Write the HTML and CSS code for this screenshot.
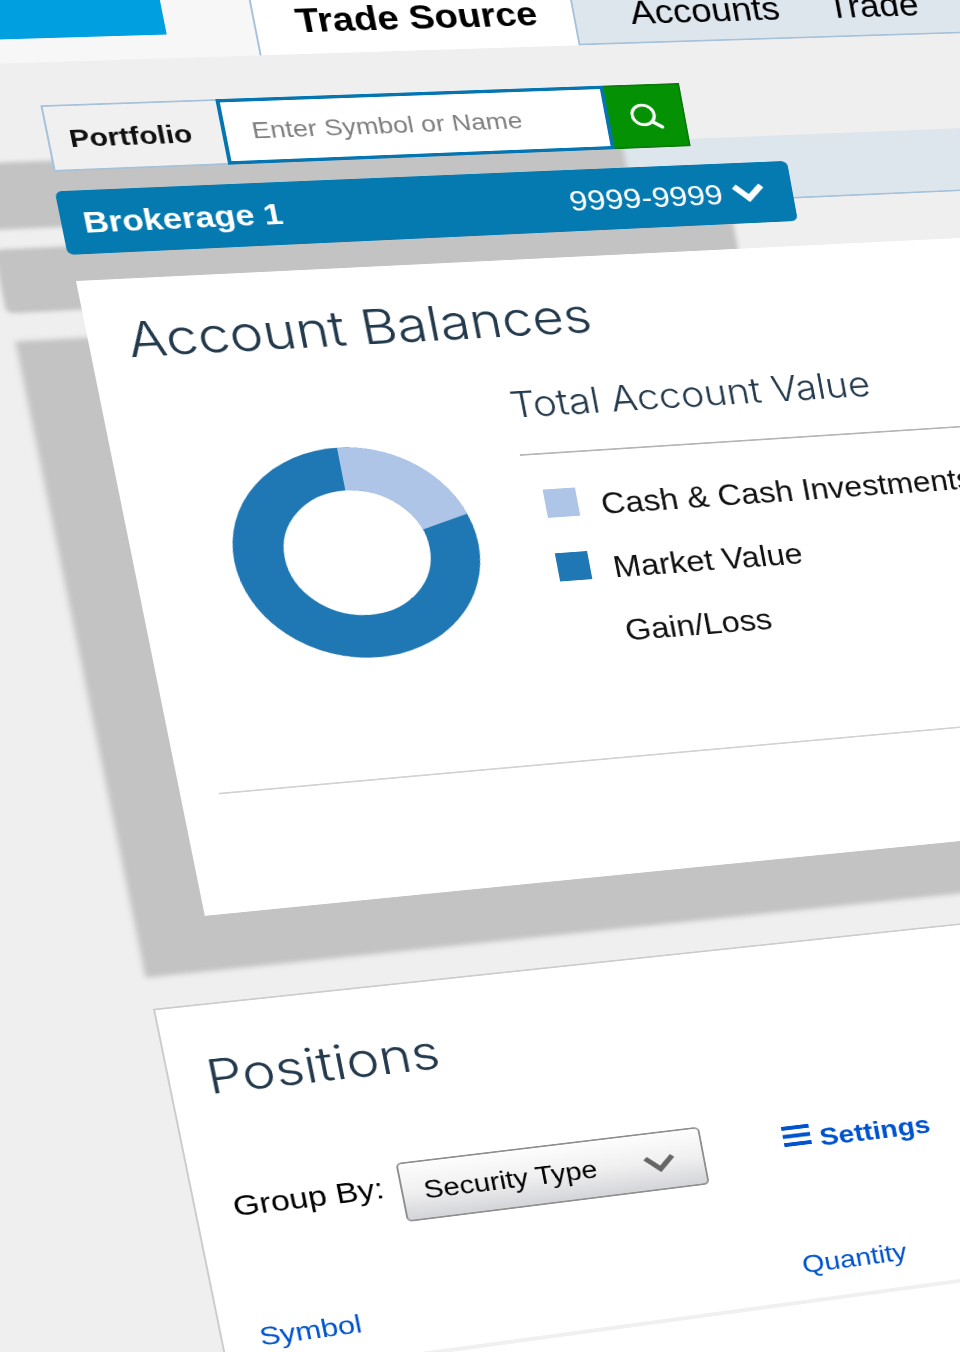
FILE: index.html
```html
<!DOCTYPE html>
<html lang="en">
<head>
<meta charset="utf-8">
<title>Trade Source</title>
<link rel="stylesheet" href="styles.css">
</head>
<body>
<div class="scene">
  <div class="plane">
    <header class="header">
      <div class="logo"></div>
      <a class="tab" href="#">Trade Source</a>
      <nav class="nav">
        <a href="#">Accounts</a>
        <a href="#">Trade</a>
      </nav>
    </header>
    <div class="subnav"></div>
    <main class="main">
      <form class="search">
        <label class="search-label" for="symbol">Portfolio</label>
        <input class="search-input" id="symbol" type="text" placeholder="Enter Symbol or Name">
        <button class="search-button" type="button" aria-label="Search">
          <svg width="34" height="32" viewBox="0 0 34 32" fill="none" stroke="#fff" stroke-width="3.500">
            <circle cx="13.500" cy="14.500" r="12"/>
            <path d="M22 23L32 30" stroke-width="4" stroke-linecap="round"/>
          </svg>
        </button>
      </form>
      <button class="account" type="button">
        <span class="account-name">Brokerage 1</span>
        <span class="account-number">9999-9999</span>
        <svg width="36" height="26" viewBox="0 0 36 26" fill="none" stroke="#fff" stroke-width="7">
          <path d="M3 4L18 19L33 4"/>
        </svg>
      </button>
      <section class="card balances">
        <h1 class="title">Account Balances</h1>
        <div class="balances-body">
          <div class="chart">
            <svg width="256" height="256" viewBox="0 0 256 256" fill="none" stroke-width="52">
              <circle cx="128" cy="128" r="102" stroke="#1f77b4"/>
              <path d="M128 26A102 102 0 0 1 225.4 97.8" stroke="#aec5e7"/>
            </svg>
          </div>
          <div class="totals">
            <h2 class="subtitle">Total Account Value</h2>
            <ul class="legend">
              <li><span class="swatch swatch-cash"></span>Cash &amp; Cash Investments</li>
              <li><span class="swatch swatch-market"></span>Market Value</li>
              <li><span class="swatch"></span>Gain/Loss</li>
            </ul>
          </div>
        </div>
        <div class="balances-footer"></div>
      </section>
      <section class="card positions">
        <h1 class="title">Positions</h1>
        <div class="toolbar">
          <label class="group-label" for="group">Group By:</label>
          <div class="select">
            <select id="group"><option>Security Type</option></select>
            <svg class="select-arrow" width="36" height="26" viewBox="0 0 36 26" fill="none" stroke="#666" stroke-width="6">
              <path d="M3 4L18 19L33 4"/>
            </svg>
          </div>
          <a class="settings" href="#">
            <svg class="settings-icon" width="31" height="26" viewBox="0 0 31 26" fill="#0053cf">
              <path d="M0 0h31v5H0zM0 10.500h31v5H0zM0 21h31v5H0z"/>
            </svg>
            Settings
          </a>
        </div>
        <table class="table">
          <thead>
            <tr><th class="col-symbol"><a href="#">Symbol</a></th><th><a href="#">Quantity</a></th></tr>
          </thead>
        </table>
      </section>
    </main>
  </div>
</div>
</body>
</html>
```
FILE: styles.css
```css
* {
  box-sizing: border-box;
}

body {
  margin: 0;
  background: #efefef;
  font-family: "Liberation Sans", Arial, sans-serif;
  color: #111;
}

a {
  text-decoration: none;
}

.scene {
  height: 100vh;
  overflow: hidden;
}

/* One tilted plane carries the whole interface. */
.plane {
  position: relative;
  isolation: isolate;
  width: 150vw;
  transform-origin: 0 0;
  transform:
    matrix3d(1.0059, -0.02678, 0, 0.00007784,
             0.1731, 0.85119, 0, 0.00002205,
             0, 0, 1, 0,
             76, 281, 0, 1)
    translate(-200px, -360px);
}

.header {
  display: flex;
  height: 103px;
  background: #f7f7f7;
}

.logo {
  width: 340px;
  height: 75px;
  margin-right: 90px;
  background: #009fe0;
}

.tab,
.nav {
  display: flex;
  align-items: flex-end;
  padding-bottom: 16px;
  font-size: 40px;
  line-height: 48px;
}

.tab {
  width: 336px;
  padding-left: 42px;
  border-left: 2px solid #a6c2da;
  background: #fff;
  color: #000;
  font-weight: bold;
}

.nav {
  flex: 1;
  gap: 54px;
  padding-left: 60px;
  padding-bottom: 12px;
  border-left: 2px solid #a6c2da;
  border-bottom: 2px solid #a6c2da;
  background: #dde5ed;
}

.nav a {
  color: #000;
}

.subnav {
  position: absolute;
  z-index: -1;
  top: 222px;
  left: 600px;
  right: 0;
  height: 79px;
  border-bottom: 2px solid #a6c2da;
  background: #dde5ed;
}

.main {
  padding: 50px 0 0 200px;
}

.search {
  display: flex;
  width: 667px;
  height: 78px;
  box-shadow: -74px 65px 5px #c3c3c3;
}

.search-label {
  display: flex;
  align-items: center;
  width: 176px;
  padding: 2px 0 0 20px;
  border: 2px solid #a6c2da;
  border-right: 0;
  background: #f0f0f0;
  font-size: 30px;
  font-weight: bold;
}

.search-input {
  flex: 1;
  min-width: 0;
  padding: 0 27px;
  border: 4px solid #0475b0;
  border-radius: 0;
  background: #fff;
  font: 28px "Liberation Sans", Arial, sans-serif;
}

.search-input::placeholder {
  color: #808080;
}

.search-button {
  display: flex;
  align-items: center;
  justify-content: center;
  width: 83px;
  padding: 0;
  border: 2px solid #0a7a0a;
  border-left: 0;
  background: #049204;
}

.account {
  display: flex;
  align-items: center;
  gap: 11px;
  width: 773px;
  height: 75px;
  margin: 23px 0 31px -3px;
  padding: 0 31px 0 22px;
  border: 0;
  border-radius: 7px;
  background: #047ab0;
  box-shadow: -72px 65px 5px #c3c3c3;
  color: #fff;
  font: 35px "Liberation Sans", Arial, sans-serif;
}

.account-name {
  margin-right: auto;
  font-weight: bold;
}

.card {
  background: #fff;
}

.title,
.subtitle {
  margin: 0;
  color: #23394c;
  font-family: Inter, "Liberation Sans", sans-serif;
  font-weight: 300;
}

.title {
  font-size: 58px;
  line-height: 72px;
}

.subtitle {
  padding-bottom: 35px;
  border-bottom: 2px solid #b5b5b5;
  font-size: 43px;
  line-height: 52px;
}

.balances {
  padding: 36px 0 0 39px;
  box-shadow: -72px 67px 6px #c3c3c3;
}

.balances-body {
  display: grid;
  grid-template-columns: 381px 1fr;
  min-height: 468px;
  margin-top: 42px;
}

.chart {
  padding-top: 65px;
  text-align: center;
}

.legend {
  display: flex;
  flex-direction: column;
  gap: 35px;
  margin: 0;
  padding: 43px 0 0 17px;
  list-style: none;
  font-size: 36px;
  line-height: 42px;
}

.legend li {
  display: flex;
  align-items: baseline;
  gap: 25px;
}

.swatch {
  width: 35px;
  height: 35px;
}

.swatch-cash {
  background: #aec5e7;
}

.swatch-market {
  background: #1f77b4;
}

.balances-footer {
  height: 146px;
  border-top: 2px solid #d2d2d2;
}

.positions {
  min-height: 640px;
  margin: 105px 0 0 -71px;
  padding: 51px 0 0 38px;
  border: 2px solid #ccc;
}

.toolbar {
  display: flex;
  align-items: flex-start;
  margin-top: 95px;
}

.group-label {
  width: 175px;
  color: #000;
  font-size: 35px;
  line-height: 58px;
}

.select {
  position: relative;
  width: 330px;
  margin-right: 90px;
}

.select select {
  display: block;
  width: 100%;
  height: 74px;
  padding: 0 22px;
  appearance: none;
  border: 2px solid #8e8e8e;
  border-radius: 6px;
  background: linear-gradient(#fdfdfd, #f0f0f1 50%, #d4d5d9);
  color: #000;
  font: 31px "Liberation Sans", Arial, sans-serif;
}

.select-arrow {
  position: absolute;
  top: 28px;
  right: 32px;
  pointer-events: none;
}

.settings {
  display: flex;
  align-items: center;
  gap: 10px;
  color: #0053cf;
  font-size: 32px;
  font-weight: bold;
  line-height: 64px;
}

.settings-icon {
  margin-bottom: 12px;
}

.table {
  width: 100%;
  margin-top: 97px;
  border-collapse: collapse;
  font-size: 32px;
  line-height: 40px;
}

.table th {
  padding: 0 0 25px;
  border-bottom: 5px solid #f0f0f0;
  font-weight: normal;
  text-align: left;
}

.table a {
  color: #0053cf;
}

.col-symbol {
  width: 590px;
}
```
